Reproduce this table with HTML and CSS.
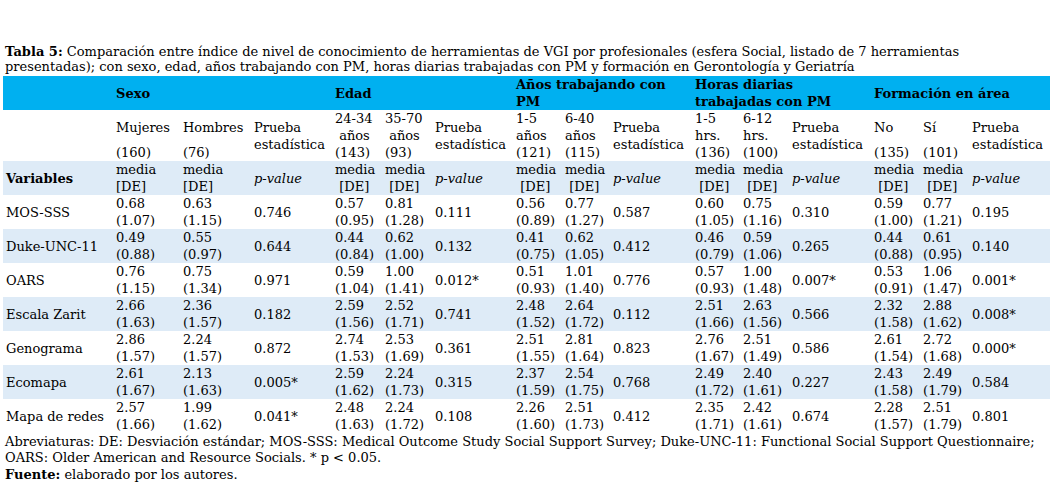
FILE: index.html
```html
<!DOCTYPE html>
<html lang="es">
<head>
<meta charset="utf-8">
<title>Tabla 5</title>
<link rel="stylesheet" href="styles.css">
</head>
<body>
<div class="page">
  <p class="caption"><b>Tabla 5:</b> <span>Comparación entre índice de nivel de conocimiento de herramientas de VGI por profesionales (esfera Social, listado de 7 herramientas</span><br><span>presentadas); con sexo, edad, años trabajando con PM, horas diarias trabajadas con PM y formación en Gerontología y Geriatría</span></p>
  <table class="tbl">
    <colgroup>
      <col class="c-var"><col class="c-muj"><col class="c-hom"><col class="c-pr1">
      <col class="c-50"><col class="c-50"><col class="c-pr1">
      <col class="c-49"><col class="c-48"><col class="c-pr2">
      <col class="c-48"><col class="c-49"><col class="c-pr2">
      <col class="c-49"><col class="c-49"><col class="c-pr3">
    </colgroup>
    <thead>
      <tr class="group">
        <th></th>
        <th colspan="3">Sexo</th>
        <th colspan="3">Edad</th>
        <th colspan="3">Años trabajando con<br>PM</th>
        <th colspan="3">Horas diarias<br>trabajadas con PM</th>
        <th colspan="3">Formación en área</th>
      </tr>
      <tr class="sub">
        <td></td>
        <td class="split"><div class="lbl">Mujeres</div><div>(160)</div></td>
        <td class="split"><div class="lbl">Hombres</div><div>(76)</div></td>
        <td class="mid">Prueba estadística</td>
        <td class="top">24-34<br>&nbsp;años<br>(143)</td>
        <td class="top">35-70<br>&nbsp;años<br>(93)</td>
        <td class="mid">Prueba estadística</td>
        <td class="top">1-5<br>años<br>(121)</td>
        <td class="top">6-40<br>años<br>(115)</td>
        <td class="mid">Prueba estadística</td>
        <td class="top">1-5<br>hrs.<br>(136)</td>
        <td class="top">6-12<br>hrs.<br>(100)</td>
        <td class="mid">Prueba estadística</td>
        <td class="split"><div class="lbl">No</div><div>(135)</div></td>
        <td class="split"><div class="lbl">Sí</div><div>(101)</div></td>
        <td class="mid">Prueba estadística</td>
      </tr>
      <tr class="band varrow">
        <th class="var">Variables</th>
        <td>media<br>[DE]</td>
        <td>media<br>[DE]</td>
        <td class="pv">p-value</td>
        <td>media<br>&nbsp;[DE]</td>
        <td>media<br>&nbsp;[DE]</td>
        <td class="pv">p-value</td>
        <td>media<br>&nbsp;[DE]</td>
        <td>media<br>&nbsp;[DE]</td>
        <td class="pv">p-value</td>
        <td>media<br>&nbsp;[DE]</td>
        <td>media<br>&nbsp;[DE]</td>
        <td class="pv">p-value</td>
        <td>media<br>&nbsp;[DE]</td>
        <td>media<br>&nbsp;[DE]</td>
        <td class="pv">p-value</td>
      </tr>
    </thead>
    <tbody>
      <tr>
        <td class="name">MOS-SSS</td>
        <td>0.68<br>(1.07)</td><td>0.63<br>(1.15)</td><td class="p">0.746</td>
        <td>0.57<br>(0.95)</td><td>0.81<br>(1.28)</td><td class="p">0.111</td>
        <td>0.56<br>(0.89)</td><td>0.77<br>(1.27)</td><td class="p">0.587</td>
        <td>0.60<br>(1.05)</td><td>0.75<br>(1.16)</td><td class="p">0.310</td>
        <td>0.59<br>(1.00)</td><td>0.77<br>(1.21)</td><td class="p">0.195</td>
      </tr>
      <tr class="band">
        <td class="name">Duke-UNC-11</td>
        <td>0.49<br>(0.88)</td><td>0.55<br>(0.97)</td><td class="p">0.644</td>
        <td>0.44<br>(0.84)</td><td>0.62<br>(1.00)</td><td class="p">0.132</td>
        <td>0.41<br>(0.75)</td><td>0.62<br>(1.05)</td><td class="p">0.412</td>
        <td>0.46<br>(0.79)</td><td>0.59<br>(1.06)</td><td class="p">0.265</td>
        <td>0.44<br>(0.88)</td><td>0.61<br>(0.95)</td><td class="p">0.140</td>
      </tr>
      <tr>
        <td class="name">OARS</td>
        <td>0.76<br>(1.15)</td><td>0.75<br>(1.34)</td><td class="p">0.971</td>
        <td>0.59<br>(1.04)</td><td>1.00<br>(1.41)</td><td class="p">0.012*</td>
        <td>0.51<br>(0.93)</td><td>1.01<br>(1.40)</td><td class="p">0.776</td>
        <td>0.57<br>(0.93)</td><td>1.00<br>(1.48)</td><td class="p">0.007*</td>
        <td>0.53<br>(0.91)</td><td>1.06<br>(1.47)</td><td class="p">0.001*</td>
      </tr>
      <tr class="band">
        <td class="name">Escala Zarit</td>
        <td>2.66<br>(1.63)</td><td>2.36<br>(1.57)</td><td class="p">0.182</td>
        <td>2.59<br>(1.56)</td><td>2.52<br>(1.71)</td><td class="p">0.741</td>
        <td>2.48<br>(1.52)</td><td>2.64<br>(1.72)</td><td class="p">0.112</td>
        <td>2.51<br>(1.66)</td><td>2.63<br>(1.56)</td><td class="p">0.566</td>
        <td>2.32<br>(1.58)</td><td>2.88<br>(1.62)</td><td class="p">0.008*</td>
      </tr>
      <tr>
        <td class="name">Genograma</td>
        <td>2.86<br>(1.57)</td><td>2.24<br>(1.57)</td><td class="p">0.872</td>
        <td>2.74<br>(1.53)</td><td>2.53<br>(1.69)</td><td class="p">0.361</td>
        <td>2.51<br>(1.55)</td><td>2.81<br>(1.64)</td><td class="p">0.823</td>
        <td>2.76<br>(1.67)</td><td>2.51<br>(1.49)</td><td class="p">0.586</td>
        <td>2.61<br>(1.54)</td><td>2.72<br>(1.68)</td><td class="p">0.000*</td>
      </tr>
      <tr class="band">
        <td class="name">Ecomapa</td>
        <td>2.61<br>(1.67)</td><td>2.13<br>(1.63)</td><td class="p">0.005*</td>
        <td>2.59<br>(1.62)</td><td>2.24<br>(1.73)</td><td class="p">0.315</td>
        <td>2.37<br>(1.59)</td><td>2.54<br>(1.75)</td><td class="p">0.768</td>
        <td>2.49<br>(1.72)</td><td>2.40<br>(1.61)</td><td class="p">0.227</td>
        <td>2.43<br>(1.58)</td><td>2.49<br>(1.79)</td><td class="p">0.584</td>
      </tr>
      <tr>
        <td class="name">Mapa de redes</td>
        <td>2.57<br>(1.66)</td><td>1.99<br>(1.62)</td><td class="p">0.041*</td>
        <td>2.48<br>(1.63)</td><td>2.24<br>(1.72)</td><td class="p">0.108</td>
        <td>2.26<br>(1.60)</td><td>2.51<br>(1.73)</td><td class="p">0.412</td>
        <td>2.35<br>(1.71)</td><td>2.42<br>(1.61)</td><td class="p">0.674</td>
        <td>2.28<br>(1.57)</td><td>2.51<br>(1.79)</td><td class="p">0.801</td>
      </tr>
    </tbody>
  </table>
  <p class="notes"><span>Abreviaturas: DE: Desviación estándar; MOS-SSS: Medical Outcome Study Social Support Survey; Duke-UNC-11: Functional Social Support Questionnaire;</span><br><span>OARS: Older American and Resource Socials. * p &lt; 0.05.</span><br><b>Fuente:</b> elaborado por los autores.</p>
</div>
</body>
</html>
```

FILE: styles.css
```css
html, body {
  margin: 0;
  padding: 0;
  background: #ffffff;
}

body {
  font-family: "DejaVu Serif", "Liberation Serif", serif;
  font-size: 13px;
  color: #000000;
}

.page {
  padding: 43.5px 3px 0 3px;
}

.caption {
  margin: 0 0 1.5px 0;
  padding-left: 2px;
  line-height: 15.5px;
  width: 1045px;
  white-space: nowrap;
}

.caption b,
.notes b {
  font-weight: bold;
}

.tbl {
  border-collapse: collapse;
  table-layout: fixed;
  width: 1047px;
  line-height: 17px;
}

.tbl th,
.tbl td {
  padding: 0 0 0 3px;
  text-align: left;
  vertical-align: top;
  white-space: nowrap;
  overflow: visible;
}

.c-var { width: 110px; }
.c-muj { width: 67px; }
.c-hom { width: 71px; }
.c-pr1 { width: 81px; }
.c-50 { width: 50px; }
.c-49 { width: 49px; }
.c-48 { width: 48px; }
.c-pr2 { width: 82px; }
.c-pr3 { width: 81px; }

.group {
  background: #00b0f0;
}

.group th {
  font-weight: bold;
  vertical-align: middle;
  height: 34px;
}

.sub td {
  height: 51px;
}

.sub .mid {
  vertical-align: middle;
  white-space: normal;
}

.sub .split .lbl {
  padding-top: 8.5px;
  margin-bottom: 8.5px;
}

.band {
  background: #deebf7;
}

.varrow .var {
  font-weight: bold;
  vertical-align: middle;
}

.varrow .pv {
  font-style: italic;
  vertical-align: middle;
}

.tbl tbody td {
  height: 34px;
}

.tbl tbody .name,
.tbl tbody .p {
  vertical-align: middle;
}

.notes {
  margin: 0;
  padding-left: 2px;
  padding-top: 0.5px;
  line-height: 16.5px;
  white-space: nowrap;
}
```
